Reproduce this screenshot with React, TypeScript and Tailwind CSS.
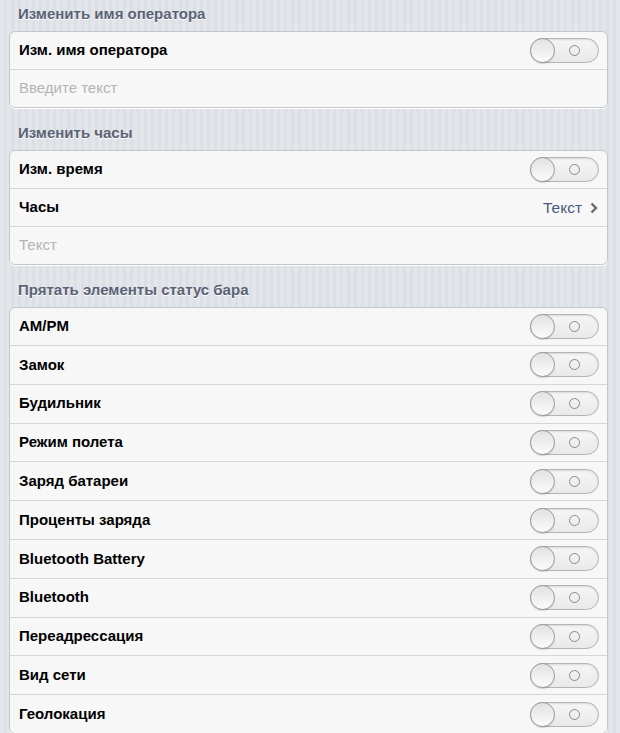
import React from 'react';

function Toggle() {
  return (
    <div className="relative h-[25px] w-[69px] rounded-full border border-[#b4b4b4] bg-gradient-to-b from-[#f6f6f6] to-[#e9e9e9] shadow-[inset_0_1px_2px_rgba(0,0,0,0.12)]">
      <div className="absolute left-[-1px] top-[-1px] h-[25px] w-[25px] rounded-full border border-[#9c9c9c] bg-gradient-to-b from-[#e2e2e2] to-[#fbfbfb] shadow-[0_1px_1px_rgba(0,0,0,0.15)]" />
      <div className="absolute left-[38px] top-[6px] h-[11px] w-[11px] rounded-full border-[1.5px] border-[#8a8a8a]" />
    </div>
  );
}

function Row({ first, tall, children }: { first?: boolean; tall?: boolean; children: React.ReactNode }) {
  let cls = 'flex items-center justify-between pl-[9px] pr-[8px] ';
  if (first) cls += 'h-[37px]';
  else if (tall) cls += 'h-[38.8px] border-t border-[#d6d6d6]';
  else cls += 'h-[38px] border-t border-[#d6d6d6]';
  return <div className={cls}>{children}</div>;
}

function Label({ text }: { text: string }) {
  return <span className="text-[15px] font-bold text-black">{text}</span>;
}

function Header({ text, first }: { text: string; first?: boolean }) {
  return (
    <div className={first ? 'pl-[18px] pt-[5px] pb-2' : 'pl-[18px] pt-4 pb-2'}>
      <span className="block text-[15px] font-bold leading-[18px] text-[#5a6275] [text-shadow:0_1px_0_#ffffff]">
        {text}
      </span>
    </div>
  );
}

function Card({ children }: { children: React.ReactNode }) {
  return (
    <div className="ml-[9px] mr-[12px] rounded-[6px] border border-[#c4c6ca] bg-[#f7f7f7] shadow-[0_1px_0_#ffffff]">
      {children}
    </div>
  );
}

const statusItems = [
  'AM/PM',
  'Замок',
  'Будильник',
  'Режим полета',
  'Заряд батареи',
  'Проценты заряда',
  'Bluetooth Battery',
  'Bluetooth',
  'Переадрессация',
  'Вид сети',
  'Геолокация',
];

export default function App() {
  return (
    <div
      className="min-h-[733px] w-full bg-[#dfe2e7] bg-[repeating-linear-gradient(90deg,#e2e5e9_0px,#e2e5e9_4px,#dcdfe4_4px,#dcdfe4_7px)] pb-10"
      style={{ fontFamily: '"Liberation Sans", Arial, sans-serif' }}
    >
      <Header text="Изменить имя оператора" first />
      <Card>
        <Row first>
          <Label text="Изм. имя оператора" />
          <Toggle />
        </Row>
        <Row>
          <span className="text-[15px] text-[#b4b4b4]">Введите текст</span>
        </Row>
      </Card>

      <Header text="Изменить часы" />
      <Card>
        <Row first>
          <Label text="Изм. время" />
          <Toggle />
        </Row>
        <Row>
          <Label text="Часы" />
          <div className="flex items-center gap-[8px] pr-[1px]">
            <span className="text-[15.5px] text-[#4b5a7d]">Текст</span>
            <svg width="8" height="12" viewBox="0 0 8 12">
              <path d="M1.5 1.5 L6 6 L1.5 10.5" fill="none" stroke="#6b6b6b" strokeWidth="2.4" />
            </svg>
          </div>
        </Row>
        <Row>
          <span className="text-[15px] text-[#b4b4b4]">Текст</span>
        </Row>
      </Card>

      <Header text="Прятать элементы статус бара" />
      <Card>
        {statusItems.map((item, i) => (
          <Row key={item} first={i === 0} tall>
            <Label text={item} />
            <Toggle />
          </Row>
        ))}
      </Card>
    </div>
  );
}
